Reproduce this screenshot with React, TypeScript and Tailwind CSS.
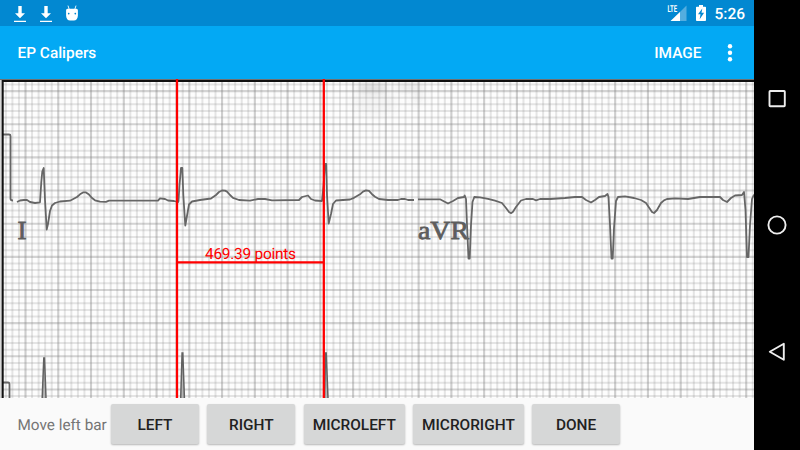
import React from "react";

const ACTIONS = [
  { label: "LEFT", width: "w-[88px]" },
  { label: "RIGHT", width: "w-[88px]" },
  { label: "MICROLEFT", width: "w-[101px]" },
  { label: "MICRORIGHT", width: "w-[110.5px]" },
  { label: "DONE", width: "w-[88px]" },
];

const LEAD_I =
  "17,202 20,200.5 24,200 27,200 30,202 35,203 40,202.3 41.3,182 42.3,171.5 43.7,168 45,200 46.7,229.5 48,224 50,211 52,205.5 55,203 60,201.5 70,200.7 77,197 80,194.3 83,192.4 86,192.4 89,194.6 92,198 95,200.3 100,201.7 106,201.8 109,200.7 158,200.7 160,198.3 165,199 168,200.5 174,201 178,202 178.5,201 179.5,185 181,168 182.3,168 183.3,195 185.3,225.5 187.5,213 189,204.5 192,201.5 200,200 211,198.5 216,195 219,192 222,190.5 225,190.6 227,191.6 230,195 233,197.8 239,200 250,200.6 258,199 265,199 272,200.3 299,200 302,197 308,195.5 311,199 315,200.5 322,201 323.5,186 325,164 326.2,164 327,195 328.7,223.5 331,214 333,204 336,200.5 350,199.5 354,197.8 360,194.3 363,191.6 366,190.3 369,190.8 372,194.2 375,196.8 379,199 388,200 398,200 401,199 405,199 408,200 414,200";

const LEAD_AVR =
  "418,199.3 440,199.3 448,203.5 453,201 458,198 464,197 464.7,195.5 466,199 467,225 468.5,258.5 469.7,258.5 471,225 472.5,202 474.3,197 480,197.3 488,198.8 495,200.7 502,203 506,208 509,212 511,213.2 513,211.8 516,207 521,200.5 526,199 533,199 536,200.3 540,199 550,199 565,198 575,197 582,197 586,200 591,202.5 595,200 599,197 605,196 607.5,194 608.5,197 610,225 611.5,258.5 612.7,258.5 614,228 616,201 618,197 625,196.3 634,198 641,200 646,203 649,207.5 652,212 654,213 657,210 661,203 664,200.3 667,199 675,198.3 688,199 700,197 720,197 723,200 727,202 731,198 735,195.5 742,195 744,192 745.5,210 747,257 748.5,257 750,225 752,199 754,194.5";

function DownloadIcon() {
  return (
    <svg width="14" height="18" viewBox="0 0 14 18" fill="white">
      <path d="M5.3 1h3.4v7.2H12L7 13.2 2 8.2h3.3zM1 15.8h12v1.3H1z" />
    </svg>
  );
}

function StatusBar() {
  return (
    <div className="flex h-[26px] shrink-0 items-center bg-[#0288d1] pr-[9px] pl-[13px] text-white">
      <div className="flex items-center gap-3 pt-0.5">
        <DownloadIcon />
        <DownloadIcon />
        <svg width="14" height="18" viewBox="0 0 14 18" fill="white">
          <path d="M3 .6 4.1 4M11 .6 9.9 4" stroke="white" strokeWidth=".9" />
          <path
            fillRule="evenodd"
            d="M2.6 3.7h8.8c1.1 0 1.5.8 1.5 1.9v5c0 3-1.8 5-4 5H5.1c-2.3 0-4-2-4-5v-5c0-1.1.4-1.9 1.5-1.9zM3.7 7.7a.8.8 0 1 0 .01 0zM10.3 7.7a.8.8 0 1 0 .01 0z"
          />
        </svg>
      </div>
      <div className="ml-auto flex items-center">
        <svg width="22" height="20" viewBox="0 0 22 20">
          <path d="M21.500 2.500V18H6z" fill="#54addf" />
          <path d="M0 1h13v8.500H0z" fill="#0288d1" />
          <path d="M15 9V18H5.500z" fill="white" />
          <text x="2.500" y="9.300" textLength="9.500" lengthAdjust="spacingAndGlyphs" className="fill-white font-['Roboto',sans-serif] text-[9.5px] font-bold">
            LTE
          </text>
        </svg>
        <svg className="ml-[8px]" width="12" height="18" viewBox="0 0 12 18">
          <path d="M4 1h4v1.700h2.200q.8 0 .8.8V16q0 1-.8 1H1.800Q1 17 1 16V3.500q0-.8.8-.8H4z" fill="white" />
          <path d="M7.300 4.500 3 10.300h2.500L4.700 15.200l4.400-6.400H6.500z" fill="#0288d1" />
        </svg>
        <span className="ml-[7px] pt-0.5 text-[15.5px] leading-5 font-medium">5:26</span>
      </div>
    </div>
  );
}

function AppBar() {
  return (
    <div className="flex h-[53px] shrink-0 items-center bg-[#03a9f4] pr-[21px] pl-[17.5px] text-white">
      <span className="pt-[3px] text-[15.4px] font-medium">EP Calipers</span>
      <span className="ml-auto pt-[3px] text-[15.4px] font-medium">IMAGE</span>
      <svg className="ml-[25.5px]" width="6" height="20" viewBox="0 0 6 20" fill="white">
        <circle cx="3" cy="3.2" r="2.2" />
        <circle cx="3" cy="9.7" r="2.2" />
        <circle cx="3" cy="16.2" r="2.2" />
      </svg>
    </div>
  );
}

function Grid() {
  const vertical = Array.from({ length: 116 }, (_, i) => ({ at: 25.5 + (i - 3) * 6.552, major: (i - 3) % 5 === 0 }));
  const horizontal = Array.from({ length: 49 }, (_, i) => ({ at: 91.1 + (i - 1) * 6.63, major: (i - 1) % 5 === 0 }));
  return (
    <g>
      {vertical.map((l, i) => (
        <line key={i} x1={l.at} x2={l.at} y1="80" y2="398" stroke="#808080" strokeOpacity={l.major ? 0.38 : 0.2} strokeWidth={l.major ? 2.1 : 2} />
      ))}
      {horizontal.map((l, i) => (
        <line key={i} x1="3" x2="754" y1={l.at} y2={l.at} stroke="#808080" strokeOpacity={l.major ? 0.34 : 0.2} strokeWidth={l.major ? 2.1 : 2} />
      ))}
    </g>
  );
}

function EcgChart() {
  return (
    <svg className="block h-[318.5px] w-full shrink-0" viewBox="0 79 754 318.5" preserveAspectRatio="none">
      <defs>
        <filter id="smudge" x="-30%" y="-60%" width="160%" height="220%">
          <feGaussianBlur stdDeviation="3.5" />
        </filter>
      </defs>
      <rect y="79" width="754" height="319" fill="#fdfdfd" />
      <Grid />
      <g filter="url(#smudge)" fill="#777">
        <ellipse cx="372" cy="88" rx="16" ry="4" opacity=".25" />
        <ellipse cx="410" cy="87" rx="16" ry="4" opacity=".17" />
        <ellipse cx="375" cy="103" rx="22" ry="12" opacity=".06" />
        <ellipse cx="418" cy="98" rx="6" ry="5" opacity=".1" />
      </g>
      <g className="fill-[#5d5d5d] font-['Liberation_Serif',serif] text-[26px]" stroke="#5d5d5d" strokeWidth=".8">
        <text x="17.500" y="239" textLength="9" lengthAdjust="spacingAndGlyphs">I</text>
        <text x="418" y="239" textLength="51" lengthAdjust="spacingAndGlyphs">aVR</text>
      </g>
      <g className="fill-none stroke-[#666] stroke-[1.8] [stroke-linejoin:round]">
        <path d="M3 134.500h6q1.500 0 1.500 1.500v62.500q0 2 2.500 2" />
        <polyline points={LEAD_I} />
        <polyline points={LEAD_AVR} />
        <path d="M3 382.500h5q1.500 0 1.500 2V398" />
      </g>
      <g fill="#b6b6b6" stroke="#626262" strokeWidth="1.5">
        <path d="M42.200 398 43.800 358h.7L46 398" />
        <path d="M180.700 398 182.100 353h.7L184.400 398" />
        <path d="M324.500 398 325.600 353h.6L328 398" />
      </g>
      <path d="M0 79.500h754" stroke="#707070" strokeWidth="1" />
      <path d="M2.600 398V81H754" fill="none" stroke="#111" strokeWidth="2.200" />
      <path d="M.6 80v318" stroke="#d8d8d8" strokeWidth="1.200" />
      <path d="M177 79v319M323.800 79v319M177 262.400h147" fill="none" stroke="#f00" strokeWidth="2.300" />
      <text x="205" y="259" textLength="91" className="fill-[#f00] font-['Roboto',sans-serif] text-[15.5px]">469.39 points</text>
    </svg>
  );
}

function NavigationBar() {
  return (
    <nav className="flex w-[46px] flex-col items-center justify-between bg-black pt-[88.5px] pb-[88.5px]">
      {[
        <rect key="recents" x="2.500" y="2" width="15.300" height="15.300" rx=".7" />,
        <circle key="home" cx="10" cy="10" r="8.600" />,
        <path key="back" d="M16.800 1.800v16L2.800 9.800z" strokeLinejoin="round" />,
      ].map((shape, i) => (
        <svg key={i} width="20" height="20" viewBox="0 0 20 20" fill="none" stroke="#eee" strokeWidth="1.900">
          {shape}
        </svg>
      ))}
    </nav>
  );
}

export default function App() {
  return (
    <div className="flex h-[450px] w-[800px] overflow-hidden bg-black font-['Roboto',sans-serif] [text-rendering:geometricPrecision]">
      <main className="flex w-[754px] flex-col bg-[#fafafa]">
        <StatusBar />
        <AppBar />
        <EcgChart />
        <div className="flex flex-1 items-center gap-[8.4px] pl-[17.5px]">
          <span className="-mr-[4.4px] w-[89.5px] pt-[3px] text-[15.3px] whitespace-nowrap text-[#757575]">Move left bar</span>
          {ACTIONS.map((a) => (
            <button key={a.label} className={`h-10 shrink-0 rounded-[2px] bg-[#d6d7d7] pt-[3px] text-[15.4px] font-medium text-[#212121] shadow-[0_1px_2px_rgba(0,0,0,0.28)] ${a.width}`}>
              {a.label}
            </button>
          ))}
        </div>
      </main>
      <NavigationBar />
    </div>
  );
}
